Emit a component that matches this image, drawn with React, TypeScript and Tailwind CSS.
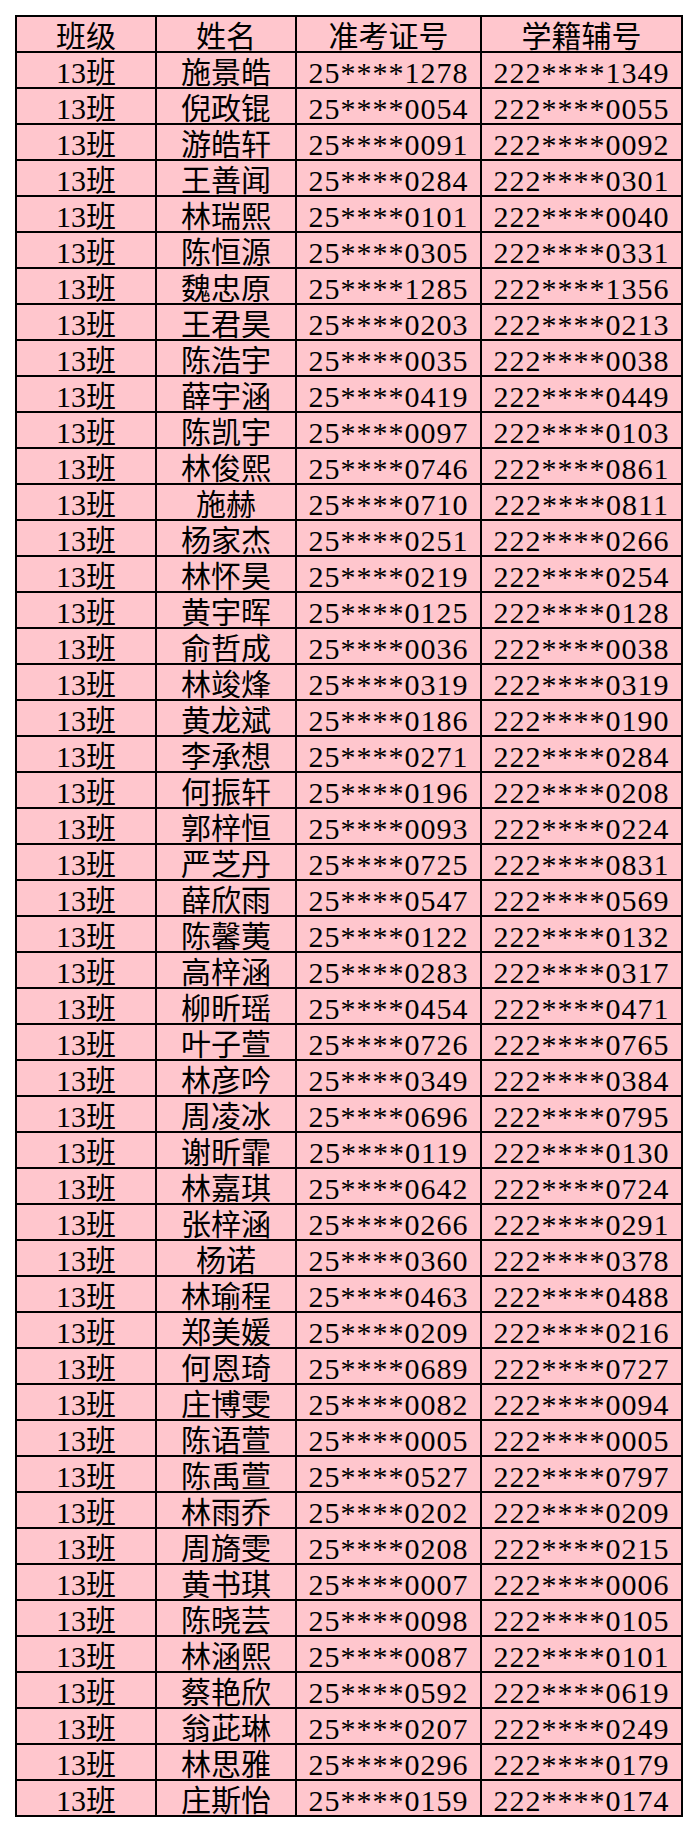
import React from "react";

const rows: [string, string, string][] = [
  ["施景皓", "25****1278", "222****1349"],
  ["倪政锟", "25****0054", "222****0055"],
  ["游皓轩", "25****0091", "222****0092"],
  ["王善闻", "25****0284", "222****0301"],
  ["林瑞熙", "25****0101", "222****0040"],
  ["陈恒源", "25****0305", "222****0331"],
  ["魏忠原", "25****1285", "222****1356"],
  ["王君昊", "25****0203", "222****0213"],
  ["陈浩宇", "25****0035", "222****0038"],
  ["薛宇涵", "25****0419", "222****0449"],
  ["陈凯宇", "25****0097", "222****0103"],
  ["林俊熙", "25****0746", "222****0861"],
  ["施赫", "25****0710", "222****0811"],
  ["杨家杰", "25****0251", "222****0266"],
  ["林怀昊", "25****0219", "222****0254"],
  ["黄宇晖", "25****0125", "222****0128"],
  ["俞哲成", "25****0036", "222****0038"],
  ["林竣烽", "25****0319", "222****0319"],
  ["黄龙斌", "25****0186", "222****0190"],
  ["李承想", "25****0271", "222****0284"],
  ["何振轩", "25****0196", "222****0208"],
  ["郭梓恒", "25****0093", "222****0224"],
  ["严芝丹", "25****0725", "222****0831"],
  ["薛欣雨", "25****0547", "222****0569"],
  ["陈馨荑", "25****0122", "222****0132"],
  ["高梓涵", "25****0283", "222****0317"],
  ["柳昕瑶", "25****0454", "222****0471"],
  ["叶子萱", "25****0726", "222****0765"],
  ["林彦吟", "25****0349", "222****0384"],
  ["周凌冰", "25****0696", "222****0795"],
  ["谢昕霏", "25****0119", "222****0130"],
  ["林嘉琪", "25****0642", "222****0724"],
  ["张梓涵", "25****0266", "222****0291"],
  ["杨诺", "25****0360", "222****0378"],
  ["林瑜程", "25****0463", "222****0488"],
  ["郑美媛", "25****0209", "222****0216"],
  ["何恩琦", "25****0689", "222****0727"],
  ["庄博雯", "25****0082", "222****0094"],
  ["陈语萱", "25****0005", "222****0005"],
  ["陈禹萱", "25****0527", "222****0797"],
  ["林雨乔", "25****0202", "222****0209"],
  ["周旖雯", "25****0208", "222****0215"],
  ["黄书琪", "25****0007", "222****0006"],
  ["陈晓芸", "25****0098", "222****0105"],
  ["林涵熙", "25****0087", "222****0101"],
  ["蔡艳欣", "25****0592", "222****0619"],
  ["翁茈琳", "25****0207", "222****0249"],
  ["林思雅", "25****0296", "222****0179"],
  ["庄斯怡", "25****0159", "222****0174"],
];

const cell =
  "h-[36px] border-r-2 border-b-2 border-black pt-[6px] leading-[28px] text-center whitespace-nowrap overflow-visible";
const numCell = cell + " tracking-[1px]";

export default function App() {
  return (
    <div className="w-[698px] h-[1832px] bg-white pt-[15px] pl-[15px] overflow-hidden">
      <div
        className="w-[668px] border-l-2 border-t-2 border-black bg-[#ffc6cd] grid grid-cols-[140px_140px_185px_201px] text-[30px] text-black"
        style={{ fontFamily: '"Liberation Serif", "Noto Sans CJK SC", serif' }}
      >
        <div className={cell}>班级</div>
        <div className={cell}>姓名</div>
        <div className={cell}>准考证号</div>
        <div className={cell}>学籍辅号</div>
        {rows.map(([name, id, sid], i) => (
          <React.Fragment key={i}>
            <div className={cell}>13班</div>
            <div className={cell}>{name}</div>
            <div className={numCell}>{id}</div>
            <div className={numCell}>{sid}</div>
          </React.Fragment>
        ))}
      </div>
    </div>
  );
}
